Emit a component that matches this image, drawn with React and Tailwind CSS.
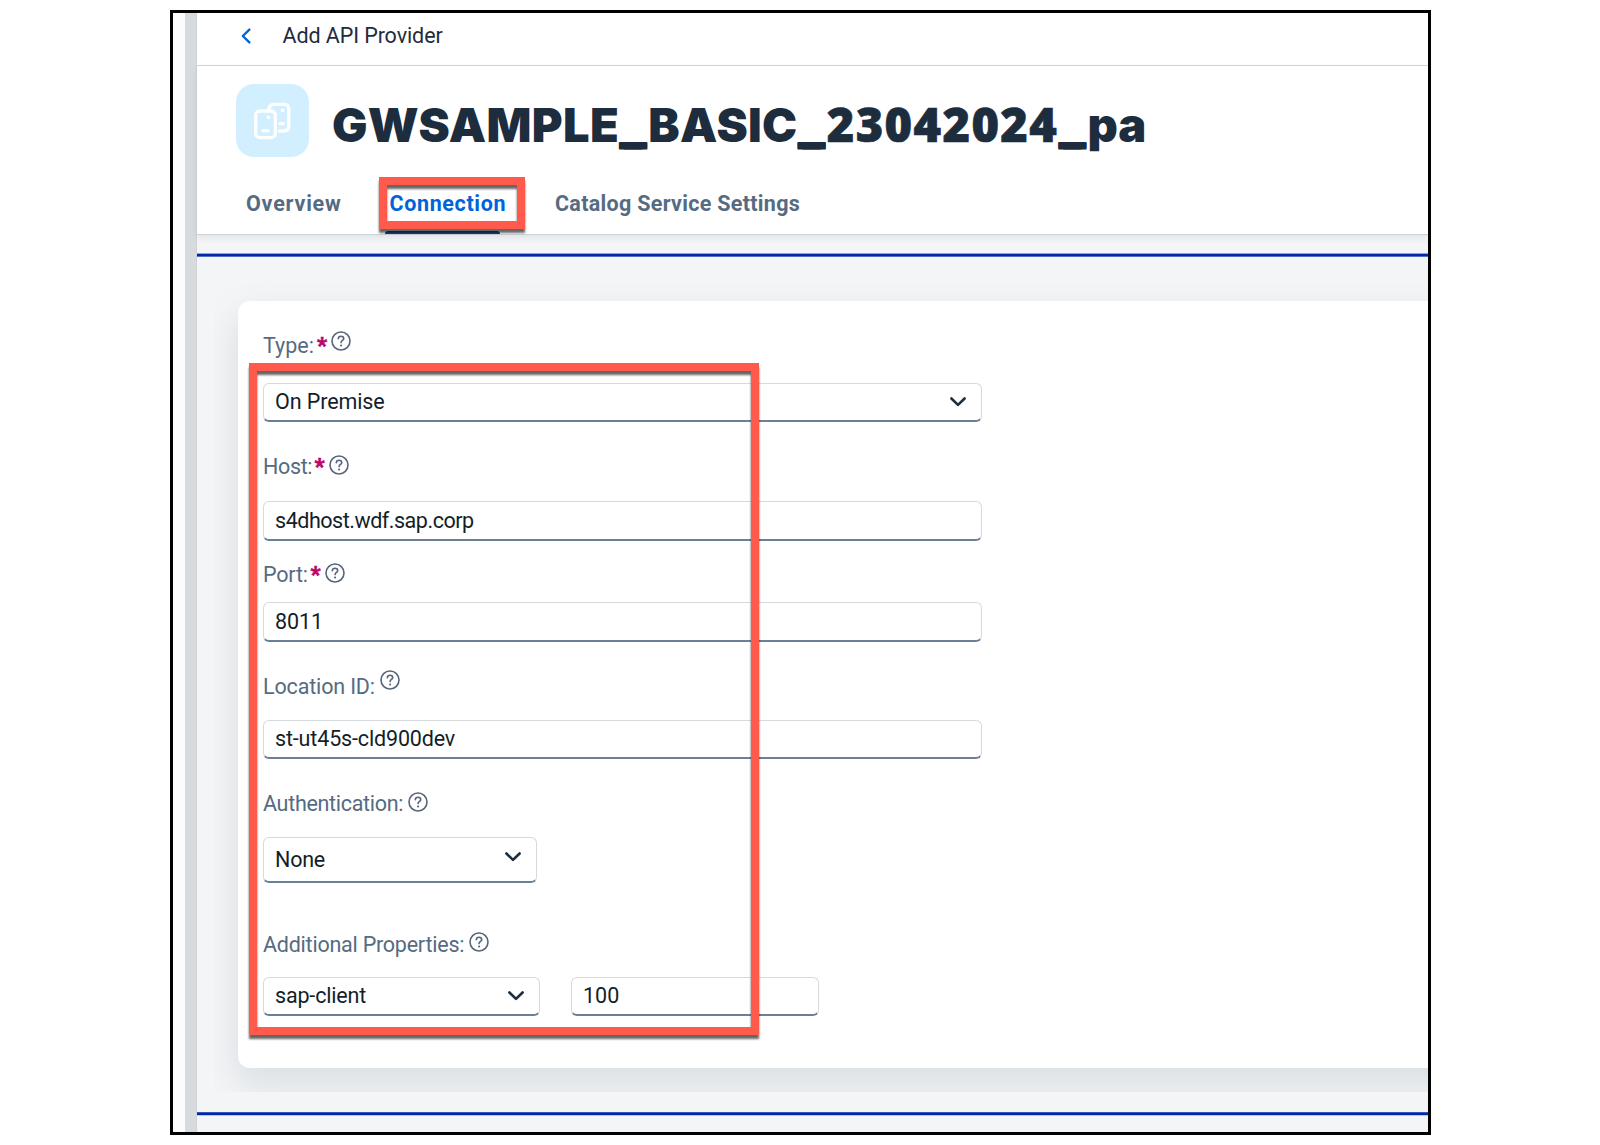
import React from 'react';

function HelpIcon() {
  return (
    <svg width="20" height="20" viewBox="0 0 20 20" fill="none" stroke="#56657a" strokeWidth="1.6" className="shrink-0" strokeLinecap="round" strokeLinejoin="round">
      <circle cx="10" cy="10" r="9" />
      <path d="M7.3 7.7C7.4 6.2 8.5 5.3 10 5.3s2.7 1 2.7 2.4c0 1.7-2.6 1.9-2.6 3.9" />
      <circle cx="10.1" cy="14.5" r="1.1" fill="#56657a" stroke="none" />
    </svg>
  );
}

function Chevron() {
  return (
    <svg width="18" height="12" viewBox="0 0 18 12" fill="none" stroke="#1d2d3e" strokeWidth="2.6" strokeLinecap="round" strokeLinejoin="round" className="shrink-0">
      <path d="M2.4 2.5 9 8.9l6.6-6.4" />
    </svg>
  );
}

function ApiProviderIcon() {
  return (
    <svg width="38" height="38" viewBox="0 0 38 38" fill="none" stroke="#fff" strokeWidth="3.3" strokeLinecap="round" strokeLinejoin="round">
      <rect x="2.7" y="9" width="19.6" height="26.6" rx="4.2" />
      <path d="M16 7.4C16 4.2 17.8 2.4 21 2.4h10c3 0 4.7 1.7 4.7 4.7v17.2c0 3-1.7 4.7-4.7 4.7h-4.5" />
      <path d="M10 28.7h5M27 21.7h3.2" strokeWidth="3.3" />
      <circle cx="15.4" cy="15.3" r="1.9" fill="#fff" stroke="none" />
      <circle cx="29.7" cy="8.4" r="1.9" fill="#fff" stroke="none" />
    </svg>
  );
}

function Label({ text, star, className, textClass, starClass, iconClass }) {
  return (
    <div className={`flex h-6 items-center whitespace-nowrap text-[21.5px] leading-6 text-[#556b82] ${className}`}>
      <span className={textClass}>{text}</span>
      {star && <span className={`font-black text-[#ba066c] [-webkit-text-stroke:0.6px_#ba066c] ${starClass}`}>*</span>}
      <span className={`relative ${iconClass}`}><HelpIcon /></span>
    </div>
  );
}

function Field({ text, className, textClass, chevronClass }) {
  return (
    <div className={`flex items-center justify-between whitespace-nowrap rounded-[6px] border border-[#d5dadf] border-b-2 border-b-[#6b7f95] bg-white pl-[11px] text-[21.5px] leading-6 text-[#131e29] ${className}`}>
      <span className={textClass}>{text}</span>
      {chevronClass && <span className={chevronClass}><Chevron /></span>}
    </div>
  );
}

function Highlight({ className }) {
  return (
    <div className={`pointer-events-none absolute border-8 border-[#ff5a4b] [filter:drop-shadow(0_4px_1px_rgba(0,0,0,0.6))] ${className}`} />
  );
}

function Underscore() {
  return <span className="tracking-[6.1px] [text-shadow:3px_0_0_#1d2d3e,5px_0_0_#1d2d3e,0_1px_0_#1d2d3e,5px_1px_0_#1d2d3e]">_</span>;
}

export default function App() {
  return (
    <div className="h-[1145px] w-[1600px] overflow-hidden bg-white pl-[170px] pt-[10px] font-['Roboto',sans-serif]">
      <div className="flex h-[1125px] w-[1261px] overflow-hidden border-[3px] border-black">
        <div className="w-3 shrink-0 bg-[#fcfcfc]" />
        <div className="w-3 shrink-0 border-r border-[#cfd3d7] bg-[#d7dbde]" />
        <div className="flex min-w-0 flex-1 flex-col bg-[#f4f5f7]">
          <header className="flex h-[53px] shrink-0 items-center border-b border-[#d4d5d6] bg-white pb-[7px] pl-[43px]">
            <svg width="12" height="18" viewBox="0 0 12 18" fill="none" stroke="#0064d9" strokeWidth="2.4" strokeLinecap="round" strokeLinejoin="round">
              <path d="M9.4 2.6 2.8 9 9.4 15.4" />
            </svg>
            <span className="ml-[30.5px] text-[21.5px] leading-6 tracking-[-0.09px] text-[#1d2d3e]">Add API Provider</span>
          </header>

          <div className="relative z-10 flex h-[169px] shrink-0 flex-col border-b border-[#d0d3d5] bg-white shadow-[0_3px_6px_rgba(85,107,130,0.12)]">
            <div className="flex h-[92px] pl-[38.5px] pt-[18.3px]">
              <div className="flex h-[73px] w-[73px] shrink-0 items-center justify-center rounded-[18px] bg-[#d1efff]">
                <ApiProviderIcon />
              </div>
              <h1 className="ml-[23.5px] mt-[8.7px] whitespace-nowrap font-['Inter',sans-serif] text-[47px] font-black leading-[62px] text-[#1d2d3e]">
                <span className="tracking-[0.35px]">GWSAMPLE</span>
                <Underscore />
                <span className="tracking-[0.3px]">BASIC</span>
                <Underscore />
                <span className="font-['Noto_Sans',sans-serif] tracking-[1.4px] [-webkit-text-stroke:0.7px_#1d2d3e]">23042024</span>
                <Underscore />
                <span>pa</span>
              </h1>
            </div>
            <nav className="mt-[33.5px] flex whitespace-nowrap pl-[49px] text-[21.5px] font-bold leading-6 text-[#556b82]">
              <span className="w-[143.5px] tracking-[0.8px]">Overview</span>
              <span className="relative w-[165.5px] tracking-[0.64px] text-[#0064d9]">
                Connection
                <span className="absolute left-[-4.5px] top-[39.5px] h-[3px] w-[115px] rounded-t bg-[#0f4a92]" />
                <Highlight className="left-[-11px] top-[-14.5px] h-[52px] w-[146px]" />
              </span>
              <span className="tracking-[0.3px]">Catalog Service Settings</span>
            </nav>
          </div>

          <div className="h-[18px] shrink-0" />
          <div className="h-1 shrink-0 border-y border-b-[#4f70c4] border-t-[#8fa3cf] bg-[#0028a8]" />

          <div className="h-[855px] shrink-0 pl-[17px]">
            <div className="h-[835px] overflow-hidden pl-6 pt-[44px]">
              <div className="relative flex h-[767px] w-[1300px] flex-col rounded-[12px] bg-white pl-[25px] shadow-[0_16px_36px_2px_rgba(70,100,105,0.15)]">
                <Label text="Type:" star className="mt-[33px]" textClass="w-[54px] tracking-[0px]" starClass="w-[14px]" iconClass="-top-[5px]" />
                <Field text="On Premise" className="mt-[25px] h-[39px] w-[719px]" textClass="tracking-[-0.1px]" chevronClass="mr-[14px]" />
                <Label text="Host:" star className="mt-[33px]" textClass="w-[51.5px] tracking-[-0.35px]" starClass="w-[14px]" iconClass="-top-[2px]" />
                <Field text="s4dhost.wdf.sap.corp" className="mt-[22px] h-[40px] w-[719px]" textClass="tracking-[-0.47px]" />
                <Label text="Port:" star className="mt-[22px]" textClass="w-[47.5px] tracking-[-0.2px]" starClass="w-[14px]" iconClass="-top-[2px]" />
                <Field text="8011" className="mt-[15px] h-[40px] w-[719px]" textClass="tracking-[-0.1px]" />
                <Label text="Location ID:" className="mt-[33px]" textClass="w-[116.5px] tracking-[-0.15px]" iconClass="-top-[7px]" />
                <Field text="st-ut45s-cld900dev" className="mt-[21px] h-[39px] w-[719px]" textClass="tracking-[-0.15px]" />
                <Label text="Authentication:" className="mt-[33px]" textClass="w-[145px] tracking-[-0.3px]" iconClass="-top-[2px]" />
                <Field text="None" className="mt-[21px] h-[46px] w-[274px]" textClass="tracking-[-0.2px]" chevronClass="relative -top-[3px] mr-[14px]" />
                <Label text="Additional Properties:" className="mt-[50px]" textClass="w-[206px] tracking-[-0.23px]" iconClass="-top-[3px]" />
                <div className="mt-[20px] flex gap-[31px]">
                  <Field text="sap-client" className="h-[39px] w-[277px]" textClass="tracking-[-0.17px]" chevronClass="mr-[14px]" />
                  <Field text="100" className="h-[39px] w-[248px]" textClass="tracking-[0px]" />
                </div>
                <Highlight className="left-[11px] top-[62px] h-[672px] w-[510px]" />
              </div>
            </div>
          </div>

          <div className="h-1 shrink-0 border-y border-b-[#b8c8ea] border-t-[#3557b3] bg-[#0028a8]" />
        </div>
      </div>
    </div>
  );
}
